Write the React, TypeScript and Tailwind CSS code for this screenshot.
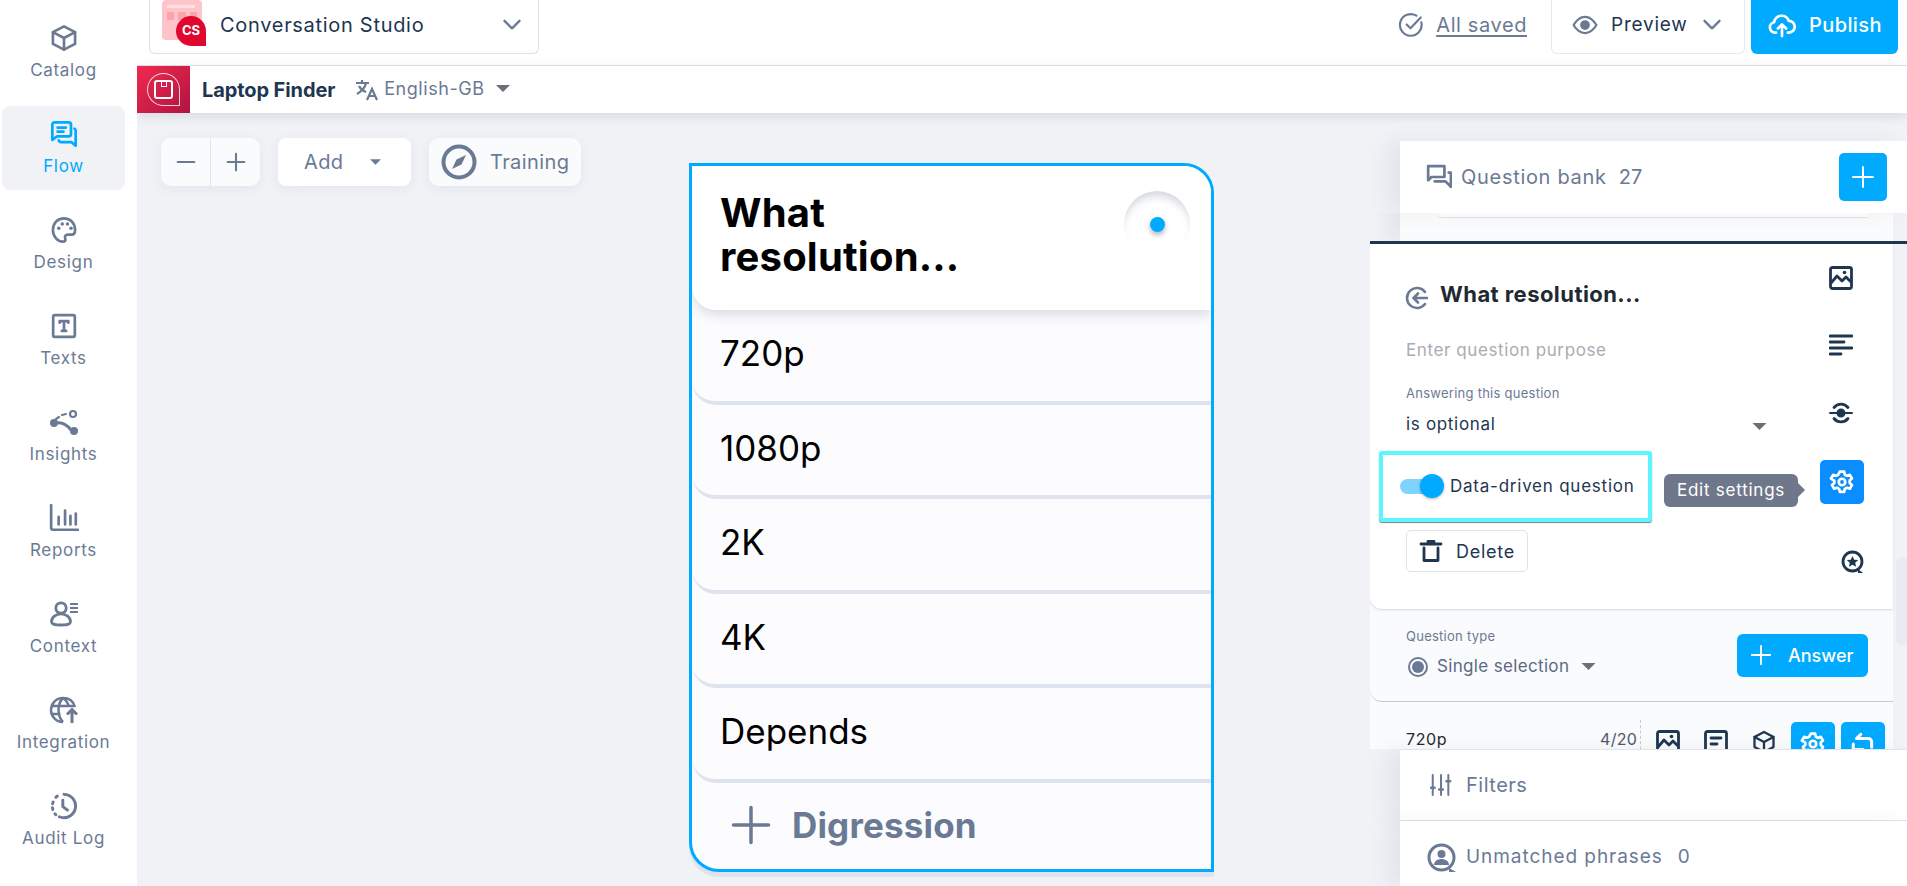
import { ReactNode } from "react";

const FONT = "font-['Inter','Liberation_Sans',sans-serif]";

function Ico({ className, children, vb = "0 0 24 24" }: { className?: string; children: ReactNode; vb?: string }) {
  return (
    <svg viewBox={vb} fill="none" stroke="currentColor" strokeWidth="2" strokeLinecap="round" strokeLinejoin="round" className={className}>
      {children}
    </svg>
  );
}

const CatalogIcon = ({ className }: { className?: string }) => (
  <Ico className={className}>
    <path d="M12 2 21.500 7v10L12 22 2.500 17V7z" strokeWidth="2.300" />
    <path d="M2.500 7 12 12l9.500-5M12 12v10" strokeWidth="2.300" />
  </Ico>
);
const FlowIcon = () => (
  <Ico className="h-[28px] w-[28px]">
    <path d="M4 2h12a2 2 0 0 1 2 2v8a2 2 0 0 1-2 2H6l-4 3V4a2 2 0 0 1 2-2z" strokeWidth="2.300" />
    <path d="M6.500 6.500h7M6.500 10h5" strokeWidth="2.300" />
    <path d="M21 7.500a1.500 1.500 0 0 1 1 1.500v13l-3.500-3H9.500a2 2 0 0 1-2-1.500" strokeWidth="2.300" />
  </Ico>
);
const DesignIcon = () => (
  <Ico className="h-[30px] w-[28px]">
    <path d="M12 2C6.500 2 2.500 6.300 2.500 12S6.800 22 11 22c2 0 2.600-1.300 2-2.800-.7-1.800.4-3.200 2.300-3.200h3.200c2 0 3-1.500 3-4C21.500 6.300 17.500 2 12 2z" strokeWidth="2.300" />
    <circle cx="7.500" cy="10.500" r="1.500" fill="currentColor" stroke="none" />
    <circle cx="10.500" cy="6.800" r="1.500" fill="currentColor" stroke="none" />
    <circle cx="15" cy="6.800" r="1.500" fill="currentColor" stroke="none" />
    <circle cx="18" cy="10.500" r="1.500" fill="currentColor" stroke="none" />
  </Ico>
);
const TextsIcon = () => (
  <Ico className="h-[26px] w-[26px]">
    <rect x="2" y="2" width="20" height="20" rx="1.500" strokeWidth="2.500" />
    <path d="M8 9V7.500h8V9M12 7.500v9M10 16.500h4" strokeWidth="2.500" />
  </Ico>
);
const InsightsIcon = () => (
  <svg viewBox="0 0 30 26" className="h-[26px] w-[30px]" fill="none">
    <circle cx="24" cy="5" r="3" stroke="currentColor" strokeWidth="2.200" />
    <circle cx="5" cy="14" r="4" fill="currentColor" />
    <circle cx="25" cy="22" r="4" fill="currentColor" />
    <path d="M8 14c6-1 10 2 14 7" stroke="currentColor" strokeWidth="3" />
    <path d="M7 10l3-2M13 6l4-1" stroke="currentColor" strokeWidth="2.200" strokeLinecap="round" />
  </svg>
);
const ReportsIcon = () => (
  <Ico className="h-[28px] w-[30px]" vb="0 0 28 26">
    <path d="M2 1v21a2 2 0 0 0 2 2h23" strokeWidth="2.500" />
    <path d="M9 12v7M15 6v13M20 11v8M25 9v10" strokeWidth="2.500" />
  </Ico>
);
const ContextIcon = () => (
  <svg viewBox="0 0 30 26" className="h-[26px] w-[30px]" fill="none" stroke="currentColor" strokeWidth="2.800">
    <circle cx="12" cy="7" r="5.200" />
    <path d="M12 12.800c-5 0-9.500 3.500-9.500 7.700 0 2.500 2 3.500 9.500 3.500s9.500-1 9.500-3.500c0-4.200-4.500-7.700-9.500-7.700z" />
    <path d="M21 3h8M21 7h8M21 11h8" strokeWidth="2" />
  </svg>
);
const IntegrationIcon = () => (
  <svg viewBox="0 0 30 28" className="h-[28px] w-[30px]" fill="none" stroke="currentColor" strokeWidth="2.500">
    <path d="M14 26C7 26 2 20.500 2 14S7 2 14 2c6 0 10.500 3.500 12 9" />
    <path d="M14 2c-6 6-6 18 0 24M14 2c3 2 5 5 6 9M2.500 10h23M2.500 18h9" />
    <path d="M23 27V14M18 18.500l5-5 5 5" strokeWidth="3" />
  </svg>
);
const AuditIcon = () => (
  <Ico className="h-[28px] w-[28px]">
    <path d="M12 2a10 10 0 1 1-4 19.200" strokeWidth="2.500" />
    <path d="M5 19.500l-.8-.8M2.400 15l-.3-1.500M2.200 10l.5-1.500M5 4.500l1.300-1" strokeWidth="2.500" />
    <path d="M11 7v5.500l4 3" strokeWidth="2.500" />
  </Ico>
);

const ImageIcon = ({ className = "h-[24px] w-[24px]" }: { className?: string }) => (
  <svg viewBox="0 0 24 24" className={className} fill="none" stroke="currentColor" strokeWidth="2.800">
    <rect x="1.500" y="1.500" width="21" height="21" rx="2" />
    <path d="M2 17l6-7 5 5 4-4 5 5" strokeLinejoin="round" />
    <circle cx="15.500" cy="6.500" r="1.800" fill="currentColor" stroke="none" />
  </svg>
);
const GearIcon = ({ className = "h-[26px] w-[26px]" }: { className?: string }) => (
  <Ico className={className}>
    <path d="M10 2.500h4l.6 2.800 1.900 1 2.700-.9 2 3.400-2.100 1.900v2.200l2.100 1.900-2 3.400-2.700-.9-1.900 1-.6 2.800h-4l-.6-2.800-1.900-1-2.700.9-2-3.400 2.100-1.900v-2.200L1.800 8.800l2-3.400 2.700.9 1.900-1z" strokeWidth="2.500" />
    <circle cx="12" cy="12" r="3" strokeWidth="2.500" />
  </Ico>
);
const Caret = ({ className }: { className?: string }) => (
  <svg viewBox="0 0 14 7" className={className}>
    <path d="M0 0h14L7 7z" fill="currentColor" />
  </svg>
);
const Chevron = () => (
  <Ico className="h-[20px] w-[20px]">
    <path d="M3 7l9 9 9-9" strokeWidth="2.800" />
  </Ico>
);
const Plus = ({ className }: { className?: string }) => (
  <Ico className={className}>
    <path d="M12 2v20M2 12h20" />
  </Ico>
);

const navItems = [
  { label: "Catalog", icon: <CatalogIcon className="h-[28px] w-[28px]" /> },
  { label: "Flow", icon: <FlowIcon />, active: true },
  { label: "Design", icon: <DesignIcon /> },
  { label: "Texts", icon: <TextsIcon /> },
  { label: "Insights", icon: <InsightsIcon /> },
  { label: "Reports", icon: <ReportsIcon /> },
  { label: "Context", icon: <ContextIcon /> },
  { label: "Integration", icon: <IntegrationIcon /> },
  { label: "Audit Log", icon: <AuditIcon /> },
];

function Sidebar() {
  return (
    <aside className="z-20 flex w-[137px] shrink-0 flex-col gap-[12px] bg-white pt-[10px] pl-[2px] pr-[12px]">
      {navItems.map((item) => (
        <div
          key={item.label}
          className={`flex h-[84px] flex-col items-center rounded-[8px] pt-[14px] ${
            item.active ? "bg-[#f0f2f6] text-[#00aaff]" : "text-[#6b7a94]"
          }`}
        >
          <div className="flex h-[28px] items-center justify-center">{item.icon}</div>
          <span className="mt-[8px] text-[17px] leading-[20px] tracking-[0.04em] whitespace-nowrap">{item.label}</span>
        </div>
      ))}
    </aside>
  );
}

function TopBar() {
  return (
    <header className="flex h-[66px] shrink-0 items-start border-b border-[#e0e3ec] bg-white pr-[9px]">
      <div className="ml-[12px] flex h-[54px] w-[390px] items-center rounded-b-[6px] border border-t-0 border-[#dde1ea] pl-[12px] pr-[16px] pb-[4px]">
        <div className="relative h-[42px] w-[42px] shrink-0 -mt-[8px]">
          <div className="h-[40px] w-[40px] rounded-[4px] bg-[#ffc4c9] p-[5px]">
            <div className="h-[3px] w-[28px] bg-[#ffdfe1]" />
            <div className="mt-[4px] flex gap-[4px]">
              <div className="h-[8px] w-[8px] bg-[#ffa3ab]" />
              <div className="h-[8px] w-[8px] bg-[#ffa3ab]" />
              <div className="h-[8px] w-[8px] bg-[#ffa3ab]" />
            </div>
          </div>
          <div className="absolute top-[16px] left-[14px] flex h-[30px] w-[30px] items-center justify-center rounded-full rounded-br-[2px] bg-[#e0082e] text-[13px] font-bold text-white">
            CS
          </div>
        </div>
        <span className="ml-[16px] text-[20px] tracking-[0.035em] text-[#1e3650]">Conversation Studio</span>
        <div className="ml-auto text-[#6b7a94]">
          <Chevron />
        </div>
      </div>
      <div className="ml-auto flex h-[54px] items-center">
        <Ico className="h-[26px] w-[26px] text-[#6b7a94] -mt-[4px]">
          <path d="M21.500 9.500A10 10 0 1 1 17 3.400" />
          <path d="M8 11.500l3.500 3.500L21 5" />
        </Ico>
        <span className="ml-[12px] -mt-[4px] text-[20px] tracking-[0.03em] text-[#6b7a94] underline underline-offset-[3px]">All saved</span>
        <div className="ml-[24px] flex h-[54px] w-[194px] items-center rounded-b-[6px] border border-t-0 border-[#e4e7ee] pl-[20px] pb-[3px]">
          <Ico className="h-[26px] w-[26px] text-[#6b7a94]">
            <path d="M1.500 12S5.500 4.500 12 4.500 22.500 12 22.500 12 18.500 19.500 12 19.500 1.500 12 1.500 12z" />
            <circle cx="12" cy="12" r="3.500" fill="currentColor" />
          </Ico>
          <span className="ml-[13px] text-[19px] tracking-[0.04em] text-[#1e3650]">Preview</span>
          <div className="ml-[14px] text-[#6b7a94]">
            <Chevron />
          </div>
        </div>
        <div className="ml-[6px] flex h-[54px] w-[147px] items-center rounded-b-[6px] bg-[#00aaff] pl-[17px] pb-[4px] text-white">
          <Ico className="h-[28px] w-[28px]">
            <path d="M7 18.500H6a4.500 4.500 0 0 1-.8-8.900A6.500 6.500 0 0 1 17.800 8.500 5 5 0 0 1 18 18.500h-1" strokeWidth="2.300" />
            <path d="M12 21.500V12M8.500 15l3.500-3.500 3.500 3.500" strokeWidth="2.300" />
          </Ico>
          <span className="ml-[13px] text-[20px] font-medium tracking-[0.02em]">Publish</span>
        </div>
      </div>
    </header>
  );
}

function SubBar() {
  return (
    <div className="relative z-10 flex h-[47px] shrink-0 items-center bg-white shadow-[0_3px_10px_rgba(60,70,100,0.14)]">
      <div className="flex h-[47px] w-[53px] items-center justify-center bg-gradient-to-br from-[#f2294f] to-[#b01440]">
        <div className="relative flex h-[33px] w-[33px] items-center justify-center rounded-full rounded-br-[2px] border border-white/80">
          <div className="h-[19px] w-[19px] rounded-[3px] border-2 border-white">
            <div className="mx-auto h-[5px] w-[6px] border-x border-b border-white" />
          </div>
        </div>
      </div>
      <span className="ml-[12px] text-[20px] font-bold text-[#1e3650] tracking-[-0.005em]">Laptop Finder</span>
      <svg viewBox="0 0 24 24" className="ml-[20px] h-[24px] w-[24px] text-[#6b7a94]" fill="none" stroke="currentColor" strokeWidth="2.200">
        <path d="M1 5h13M7 2v3M11 5c-1 5-4 8-9 11M4 8c1.500 3 4 5 7 6" />
        <path d="M12 22l5-11 5 11M14 18h6" />
      </svg>
      <span className="ml-[5px] -mt-[3px] text-[18px] tracking-[0.03em] text-[#6b7a94]">English-GB</span>
      <Caret className="ml-[11px] -mt-[2px] h-[7px] w-[14px] text-[#6c6f78]" />
    </div>
  );
}

function Toolbar() {
  const shadow = "shadow-[0_3px_12px_rgba(60,70,100,0.07)]";
  return (
    <div className="flex w-[552px] shrink-0 items-start gap-[18px] pl-[24px] pt-[25px] text-[#6b7a94]">
      <div className={`flex h-[48px] w-[99px] rounded-[10px] bg-[#fafbfc] ${shadow}`}>
        <div className="flex w-[50px] items-center justify-center border-r border-[#e0e3ec]">
          <Ico className="h-[20px] w-[20px]">
            <path d="M2 12h20" strokeWidth="2.500" />
          </Ico>
        </div>
        <div className="flex flex-1 items-center justify-center">
          <Ico className="h-[20px] w-[20px]">
            <path d="M12 2v20M2 12h20" strokeWidth="2.500" />
          </Ico>
        </div>
      </div>
      <div className={`flex h-[48px] w-[133px] items-center rounded-[8px] bg-white pl-[26px] ${shadow}`}>
        <span className="text-[20px] tracking-[0.02em]">Add</span>
        <Caret className="ml-[26px] h-[6px] w-[11px]" />
      </div>
      <div className={`flex h-[48px] w-[152px] items-center rounded-[10px] bg-[#fafbfc] pl-[12px] ${shadow}`}>
        <svg viewBox="0 0 36 36" className="h-[36px] w-[36px]" fill="none">
          <circle cx="18" cy="18" r="15.500" stroke="currentColor" strokeWidth="4" />
          <path d="M25 11l-4.500 9.500L11 25l4.500-9.500z" fill="currentColor" />
        </svg>
        <span className="ml-[13px] text-[20px] tracking-[0.02em]">Training</span>
      </div>
    </div>
  );
}

const answers = ["720p", "1080p", "2K", "4K", "Depends"];

function QuestionCard() {
  return (
    <div className="mt-[50px] flex h-[709px] w-[525px] shrink-0 flex-col overflow-hidden rounded-tr-[30px] rounded-bl-[30px] border-[3px] border-[#00aaff] bg-[#fcfcfe] shadow-[0_5px_0_#dfe3ee]">
      <div className="relative z-10 flex h-[144px] shrink-0 justify-between rounded-bl-[24px] bg-white pl-[28px] pt-[25px] pr-[21px] shadow-[0_5px_12px_rgba(70,80,120,0.18)]">
        <h2 className="text-[40px] leading-[44px] font-bold tracking-[0.005em] text-black">
          What
          <br />
          resolution...
        </h2>
        <div className="flex h-[66px] w-[66px] items-center justify-center rounded-full shadow-[inset_0_8px_8px_-3px_rgba(90,100,130,0.26)]">
          <div className="h-[15px] w-[15px] rounded-full bg-[#00aaff] shadow-[0_3px_5px_rgba(60,70,100,0.4)]" />
        </div>
      </div>
      {answers.map((answer) => (
        <div key={answer} className="flex h-[94.6px] shrink-0 items-center rounded-bl-[24px] border-b-4 border-[#dfe3ee] pl-[28px] pb-[4px] text-[35px] text-black">
          {answer}
        </div>
      ))}
      <div className="flex flex-1 items-center pl-[38px] pb-[2px] text-[#6b7a94]">
        <Plus className="h-[42px] w-[42px]" />
        <span className="ml-[20px] text-[35px] font-bold tracking-[0.005em]">Digression</span>
      </div>
    </div>
  );
}

function EditorPanel() {
  return (
    <div className="relative w-[523px] bg-[#fafbfc]">
      <div className="h-[365px] rounded-bl-[12px] bg-white pt-[34px] pl-[36px] shadow-[0_1px_2px_rgba(70,80,120,0.2)]">
        <div className="flex items-center">
          <svg viewBox="0 0 24 24" className="mt-[6px] -ml-[2px] h-[24px] w-[24px] text-[#6b7a94]" fill="none" stroke="currentColor" strokeWidth="2.600" strokeLinecap="round">
            <path d="M21 6a10 10 0 1 0 0 12" />
            <path d="M23 12H10M14 7.500 9.500 12l4.500 4.500" />
          </svg>
          <h3 className="ml-[12px] text-[22px] font-bold tracking-[0.02em] text-[#1f2933]">What resolution...</h3>
        </div>
        <p className="mt-[28px] text-[17px] leading-[22px] tracking-[0.035em] text-[#a9acb3]">Enter question purpose</p>
        <p className="mt-[23px] text-[13px] leading-[18px] tracking-[0.02em] text-[#6b7a94]">Answering this question</p>
        <div className="mt-[11px] flex w-[361px] items-center justify-between text-[#1e3650]">
          <span className="text-[17px] leading-[22px] tracking-[0.04em]">is optional</span>
          <Caret className="mt-[4px] h-[7px] w-[15px] text-[#6c6f78]" />
        </div>
        <div className="mt-[16px] -ml-[27px] flex h-[71px] w-[273px] items-center rounded-[3px] border-[4px] border-[#5cf6ff] bg-white pl-[17px] shadow-[0_1px_1px_rgba(0,0,0,0.5)]">
          <div className="relative h-[15px] w-[30px] rounded-full bg-[#7fd4ff]">
            <div className="absolute -top-[5px] left-[20px] h-[24px] w-[24px] rounded-full bg-[#00aaff] shadow-[0_1px_3px_rgba(0,0,0,0.3)]" />
          </div>
          <span className="ml-[20px] text-[17px] tracking-[0.045em] whitespace-nowrap text-[#1e3650]">Data-driven question</span>
        </div>
        <div className="mt-[8px] flex h-[42px] w-[122px] items-center rounded-[5px] border border-[#dde1ea] pl-[12px] text-[#1e3650]">
          <Ico className="h-[24px] w-[24px]">
            <path d="M2 5h20M9 5V2.500h6V5M5 9v12.500h14V9" strokeWidth="2.800" />
          </Ico>
          <span className="ml-[13px] text-[18px] tracking-[0.04em]">Delete</span>
        </div>
      </div>

      <div className="absolute top-[22px] left-[459px] flex h-[340px] w-[24px] flex-col text-[#1e3650]">
        <ImageIcon />
        <Ico className="mt-[43px] h-[24px] w-[24px]">
          <path d="M1 3h22M1 9h14M1 15h22M1 21h11" strokeWidth="2.800" />
        </Ico>
        <Ico className="mt-[42px] h-[26px] w-[24px]">
          <path d="M1 13h22" />
          <circle cx="12" cy="13" r="3.500" fill="currentColor" />
          <path d="M5 7.500a9 9 0 0 1 14 0M5 18.500a9 9 0 0 0 14 0" strokeWidth="2.800" />
        </Ico>
        <svg viewBox="0 0 24 24" className="mt-[125px] ml-[12px] h-[24px] w-[24px] shrink-0" fill="none" stroke="currentColor" strokeWidth="2.800">
          <circle cx="11.500" cy="11.500" r="9.500" />
          <path d="M17 19l5 4h-5z" fill="currentColor" stroke="none" />
          <path d="M11.500 6l1.700 3.700 4 .4-3 2.700.9 4-3.600-2.100-3.600 2.100.9-4-3-2.700 4-.4z" fill="currentColor" stroke="none" />
        </svg>
      </div>

      <div className="absolute top-[216px] left-[450px] flex h-[44px] w-[44px] items-center justify-center rounded-[5px] bg-[#0a8dff] text-white">
        <GearIcon />
      </div>
      <div className="absolute top-[230px] left-[294px] flex h-[33px] w-[134px] items-center justify-center rounded-[6px] bg-[#6f778a] text-[17px] tracking-[0.045em] whitespace-nowrap text-white">
        Edit settings
        <div className="absolute top-[9px] -right-[7px] h-0 w-0 border-y-[7px] border-l-[7px] border-y-transparent border-l-[#6f778a]" />
      </div>

      <div className="flex h-[93px] items-center justify-between rounded-bl-[12px] border-b border-[#c2c8d6] pl-[36px] pr-[25px]">
        <div className="-mt-[4px] text-[#6b7a94]">
          <p className="text-[13px] leading-[18px] tracking-[0.02em]">Question type</p>
          <div className="mt-[9px] flex items-center">
            <div className="ml-[2px] flex h-[20px] w-[20px] items-center justify-center rounded-full border-2 border-[#6b7a94]">
              <div className="h-[12px] w-[12px] rounded-full bg-[#6b7a94]" />
            </div>
            <span className="ml-[9px] text-[17px] tracking-[0.02em] text-[#5b6a84]">Single selection</span>
            <Caret className="ml-[12px] h-[7px] w-[15px] text-[#6c6f78]" />
          </div>
        </div>
        <div className="flex h-[43px] w-[131px] items-center rounded-[6px] bg-[#00aaff] pl-[13px] text-white">
          <Plus className="h-[22px] w-[22px]" />
          <span className="ml-[16px] text-[18px] font-medium">Answer</span>
        </div>
      </div>

      <div className="flex h-[60px] items-start pl-[36px] pt-[18px]">
        <span className="h-[40px] w-[194px] pt-[9px] text-[16px] leading-[20px] tracking-[0.04em] text-[#1f2933]">720p</span>
        <span className="h-[40px] w-[41px] border-r border-dashed border-[#c8ccd6] pt-[9px] text-[16px] leading-[20px] tracking-[0.02em] text-[#4f5a6e]">4/20</span>
        <div className="ml-[15px] flex gap-[24px] pt-[10px] text-[#1e3650]">
          <ImageIcon />
          <Ico className="h-[24px] w-[24px]">
            <rect x="1.500" y="1.500" width="21" height="21" rx="2" strokeWidth="2.800" />
            <path d="M7 8h10M7 14h6" strokeWidth="2.800" />
          </Ico>
          <CatalogIcon className="h-[24px] w-[24px]" />
        </div>
        <div className="ml-[15px] mt-[2px] flex h-[44px] w-[44px] items-center justify-center rounded-[5px] bg-[#00aaff] text-white">
          <GearIcon />
        </div>
        <div className="ml-[6px] mt-[2px] flex h-[44px] w-[44px] items-center justify-center rounded-[5px] bg-[#00aaff] text-white">
          <Ico className="h-[26px] w-[26px]">
            <path d="M10 3 6 7h11a3 3 0 0 1 3 3v5" strokeWidth="2.800" />
            <path d="M3 22V12M3 17h9" strokeWidth="2.800" />
          </Ico>
        </div>
      </div>
    </div>
  );
}

function RightColumn() {
  const sideShadow = "shadow-[-14px_0_18px_rgba(70,80,120,0.07)]";
  return (
    <div className="relative ml-[156px] flex w-[538px] shrink-0 flex-col pt-[28px]">
      <div className={`relative z-10 ml-[30px] flex h-[72px] shrink-0 items-center bg-white pl-[26px] pr-[21px] ${sideShadow} text-[#6b7a94]`}>
        <Ico className="h-[26px] w-[26px]">
          <path d="M17 2H2v13l3-3h12z" strokeWidth="2.500" />
          <path d="M8 16h10l5 5V8h-2" strokeWidth="2.500" />
        </Ico>
        <span className="ml-[9px] text-[20px] tracking-[0.035em]">Question bank</span>
        <span className="ml-[12px] text-[20px]">27</span>
        <div className="ml-auto flex h-[48px] w-[48px] items-center justify-center rounded-[5px] bg-[#00aaff] text-white">
          <Plus className="h-[24px] w-[24px]" />
        </div>
      </div>
      <div className="h-[536px] shrink-0 overflow-hidden">
        <div className={`ml-[30px] h-[28px] w-[493px] bg-[#fafbfc] ${sideShadow}`}>
          <div className="ml-[37px] h-[5px] w-[431px] rounded-bl-[10px] border-b border-[#dfe3ec] bg-white" />
        </div>
        <div className="border-t-[3px] border-[#1e3650]">
          <EditorPanel />
        </div>
      </div>
      <div className={`relative z-10 ml-[30px] flex h-[72px] shrink-0 items-center border-y border-[#e0e3ec] bg-white pl-[30px] text-[#6b7a94] ${sideShadow}`}>
        <Ico className="h-[24px] w-[22px]">
          <path d="M3 1v22M12 1v22M20 1v22" strokeWidth="2.200" />
          <path d="M1 15h4M10 17h4M18 8h4" strokeWidth="2.800" />
        </Ico>
        <span className="ml-[14px] text-[20px] tracking-[0.025em]">Filters</span>
      </div>
      <div className={`relative z-10 ml-[30px] flex flex-1 items-center bg-white pl-[27px] pt-[8px] text-[#6b7a94] ${sideShadow}`}>
        <svg viewBox="0 0 30 30" className="h-[30px] w-[30px]" fill="none" stroke="currentColor" strokeWidth="3">
          <circle cx="14.500" cy="14.500" r="12.500" />
          <path d="M22 25l7 4h-7z" fill="currentColor" stroke="none" />
          <circle cx="14.500" cy="11" r="4" fill="currentColor" stroke="none" />
          <path d="M7 22c0-4 4-6 7.500-6s7.500 2 7.500 6z" fill="currentColor" stroke="none" />
        </svg>
        <span className="ml-[9px] text-[19px] tracking-[0.05em]">Unmatched phrases</span>
        <span className="ml-[15px] text-[19px]">0</span>
      </div>
      <div className="absolute top-[444px] right-0 z-0 h-[88px] w-[12px] rounded-[6px] bg-[#e8ebf2]" />
    </div>
  );
}

export default function App() {
  return (
    <div className={`flex h-[886px] w-[1907px] overflow-hidden bg-[#f0f2f6] ${FONT}`}>
      <Sidebar />
      <main className="flex min-w-0 flex-1 flex-col">
        <TopBar />
        <SubBar />
        <section className="flex min-h-0 flex-1">
          <Toolbar />
          <QuestionCard />
          <RightColumn />
        </section>
      </main>
    </div>
  );
}
